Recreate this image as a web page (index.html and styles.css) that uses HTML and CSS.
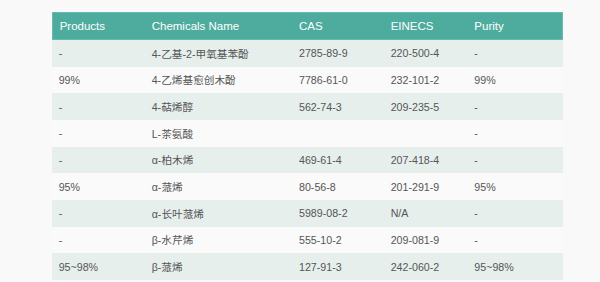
FILE: index.html
```html
<!DOCTYPE html>
<html lang="zh">
<head>
<meta charset="utf-8">
<title>Products</title>
<link rel="stylesheet" href="styles.css">
</head>
<body>
<table class="prod-table">
  <thead>
    <tr>
      <th class="c-prod">Products</th>
      <th class="c-name">Chemicals Name</th>
      <th class="c-cas">CAS</th>
      <th class="c-ein">EINECS</th>
      <th class="c-pur">Purity</th>
    </tr>
  </thead>
  <tbody>
    <tr><td>-</td><td>4-乙基-2-甲氧基苯酚</td><td>2785-89-9</td><td>220-500-4</td><td>-</td></tr>
    <tr><td>99%</td><td>4-乙烯基愈创木酚</td><td>7786-61-0</td><td>232-101-2</td><td>99%</td></tr>
    <tr><td>-</td><td>4-萜烯醇</td><td>562-74-3</td><td>209-235-5</td><td>-</td></tr>
    <tr><td>-</td><td>L-茶氨酸</td><td></td><td></td><td>-</td></tr>
    <tr><td>-</td><td>α-柏木烯</td><td>469-61-4</td><td>207-418-4</td><td>-</td></tr>
    <tr><td>95%</td><td>α-蒎烯</td><td>80-56-8</td><td>201-291-9</td><td>95%</td></tr>
    <tr><td>-</td><td>α-长叶蒎烯</td><td>5989-08-2</td><td>N/A</td><td>-</td></tr>
    <tr><td>-</td><td>β-水芹烯</td><td>555-10-2</td><td>209-081-9</td><td>-</td></tr>
    <tr><td>95~98%</td><td>β-蒎烯</td><td>127-91-3</td><td>242-060-2</td><td>95~98%</td></tr>
  </tbody>
</table>
</body>
</html>
```
FILE: styles.css
```css
html, body {
  margin: 0;
  padding: 0;
  background: #f9f9f9;
}
body {
  padding: 12px 0 0 52px;
  font-family: "Liberation Sans", "Noto Sans CJK SC", sans-serif;
  font-size: 10.67px;
  color: #555;
}
.prod-table {
  width: 511px;
  border-collapse: separate;
  border-spacing: 0;
  table-layout: fixed;
}
.prod-table th,
.prod-table td {
  box-sizing: border-box;
  padding: 0 0 0 6.7px;
  text-align: left;
  white-space: nowrap;
}
.prod-table th {
  height: 28px;
  font-size: 11.5px;
  font-weight: normal;
  color: #fff;
  background: #4eac9e;
  border-top: 1px solid #67bbae;
  border-bottom: 1px solid #67bbae;
}
.prod-table th:first-child { border-left: 1px solid #67bbae; }
.prod-table th:last-child { border-right: 1px solid #67bbae; }
.c-prod { width: 93px; }
.c-name { width: 147.3px; }
.c-cas { width: 91.7px; }
.c-ein { width: 83.7px; }
.c-pur { width: 95.3px; }
.prod-table td {
  height: 26.67px;
}
.prod-table tbody tr:nth-child(odd) td { background: #e7efed; }
.prod-table tbody tr:nth-child(even) td { background: #fafafa; }
```
